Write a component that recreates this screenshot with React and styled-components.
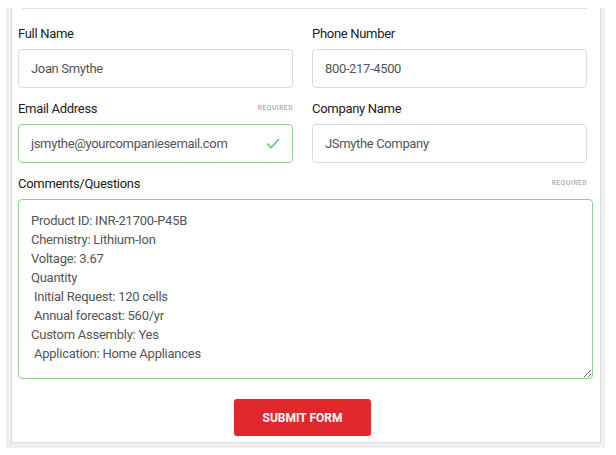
import React from 'react'
import styled, { createGlobalStyle } from 'styled-components'

const GlobalStyle = createGlobalStyle`
  body {
    margin: 0;
    background: #fff;
    font-family: Roboto, 'Liberation Sans', sans-serif;
  }
`

const comments = `Product ID: INR-21700-P45B
Chemistry: Lithium-Ion
Voltage: 3.67
Quantity
 Initial Request: 120 cells
 Annual forecast: 560/yr
Custom Assembly: Yes
 Application: Home Appliances`

const CheckIcon = () => (
  <svg width="14" height="11" viewBox="0 0 14 11" fill="none">
    <polyline points="1,5.5 5,9.5 13,1" stroke="#6cc46c" strokeWidth="1.6" />
  </svg>
)

const App = () => {
  return (
    <Page>
      <GlobalStyle />
      <Panel>
        <Card>
          <Divider />
          <Grid>
            <Field>
              <LabelRow>
                <Label>Full Name</Label>
              </LabelRow>
              <InputBox>
                <Value>Joan Smythe</Value>
              </InputBox>
            </Field>
            <Field>
              <LabelRow>
                <Label>Phone Number</Label>
              </LabelRow>
              <InputBox>
                <Value>800-217-4500</Value>
              </InputBox>
            </Field>
            <Field>
              <LabelRow>
                <Label>Email Address</Label>
                <Required>Required</Required>
              </LabelRow>
              <InputBox valid>
                <Value>jsmythe@yourcompaniesemail.com</Value>
                <CheckIcon />
              </InputBox>
            </Field>
            <Field>
              <LabelRow>
                <Label>Company Name</Label>
              </LabelRow>
              <InputBox>
                <Value>JSmythe Company</Value>
              </InputBox>
            </Field>
            <Field wide>
              <LabelRow>
                <Label>Comments/Questions</Label>
                <Required>Required</Required>
              </LabelRow>
            </Field>
          </Grid>
          <TextArea readOnly defaultValue={comments} />
          <ButtonRow>
            <SubmitButton type="button">Submit Form</SubmitButton>
          </ButtonRow>
        </Card>
      </Panel>
    </Page>
  )
}

export default App

const Page = styled.div`
  padding: 0 11px 8px 6px;
`

const Panel = styled.div`
  background: #efefef;
  padding: 0 4px 5px 5px;
`

const Card = styled.div`
  background: #fff;
  border: 1px solid #dcdcdc;
  border-top: none;
  padding: 0 7px 5px 6px;
`

const Divider = styled.div`
  height: 1px;
  background: #dedede;
  margin: 8px 6px 14px 4px;
`

const Grid = styled.div`
  display: grid;
  grid-template-columns: 275px 275px;
  column-gap: 19px;
  row-gap: 10px;
`

const Field = styled.div`
  display: flex;
  flex-direction: column;
  grid-column: ${(p) => (p.wide ? '1 / -1' : 'auto')};
`

const LabelRow = styled.div`
  display: flex;
  align-items: center;
  justify-content: space-between;
  height: 20px;
  margin-bottom: 6px;
`

const Label = styled.span`
  font-size: 13px;
  color: #222;
  letter-spacing: -0.3px;
`

const Required = styled.span`
  font-size: 6.5px;
  font-weight: 500;
  letter-spacing: 0.6px;
  text-transform: uppercase;
  color: #a8a8a8;
`

const InputBox = styled.div`
  display: flex;
  align-items: center;
  justify-content: space-between;
  box-sizing: border-box;
  height: 39px;
  padding: 0 12px 0 12px;
  border: 1px solid ${(p) => (p.valid ? '#8fd08f' : '#dadada')};
  border-radius: 4px;
  background: #fff;
`

const Value = styled.span`
  font-size: 13px;
  color: #555;
  letter-spacing: -0.35px;
`

const TextArea = styled.textarea`
  display: block;
  box-sizing: border-box;
  width: 575px;
  height: 180px;
  margin: 0;
  padding: 11px 12px;
  border: 1px solid #8fd08f;
  border-radius: 4px;
  font-family: Roboto, 'Liberation Sans', sans-serif;
  font-size: 13px;
  line-height: 19px;
  color: #555;
  letter-spacing: -0.25px;
  outline: none;
  resize: both;
`

const ButtonRow = styled.div`
  display: flex;
  justify-content: center;
  padding: 20px 6px 1px 0;
`

const SubmitButton = styled.button`
  width: 137px;
  height: 37px;
  border: none;
  border-radius: 3px;
  background: #e0272b;
  color: #fff;
  font-family: Roboto, 'Liberation Sans', sans-serif;
  font-size: 12px;
  font-weight: 700;
  text-transform: uppercase;
  cursor: pointer;
`
